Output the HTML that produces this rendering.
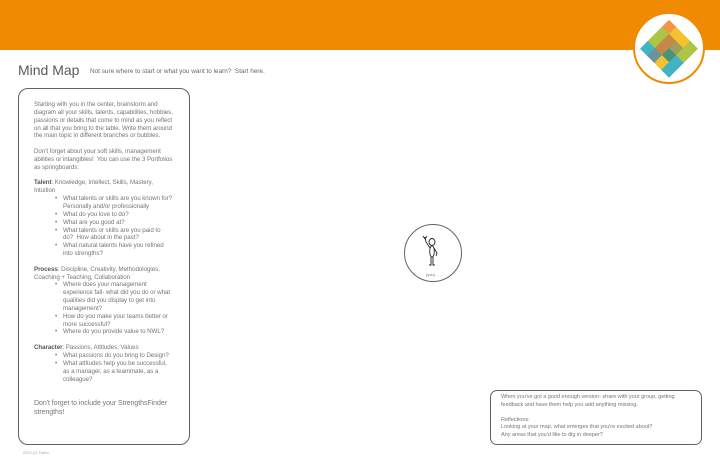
<!DOCTYPE html>
<html><head><style>
*{margin:0;padding:0;box-sizing:border-box}
body{width:720px;height:466px;background:#fff;position:relative;overflow:hidden;font-family:"Liberation Sans",sans-serif;color:#6b6560}
.bar{position:absolute;left:0;top:0;width:720px;height:50px;background:#F08A00}
.logo{position:absolute;left:633px;top:12px;width:72px;height:72px;border-radius:50%;background:#fff;border:2px solid #F08A00;overflow:hidden}
h1{position:absolute;left:18px;top:62px;font-size:14px;font-weight:normal;color:#5a5a5a}
.sub{position:absolute;left:90px;top:68px;font-size:6.4px;color:#666}
.box{position:absolute;left:18px;top:88px;width:172px;height:357px;border:1.5px solid #6b6058;border-radius:10px}
.t{position:absolute;left:34px;top:101px;width:139px;font-size:6.2px;line-height:7.85px;color:#777;letter-spacing:-0.05px}
.t p{margin-bottom:7.85px}
.t ul{list-style:none;margin-left:29px;margin-bottom:7.85px}
.t li{position:relative}
.t li:before{content:"•";position:absolute;left:-8px}
.t b{color:#555}
.big{font-size:7px;line-height:8.3px;margin-top:17px}
.you{position:absolute;left:404px;top:224px;width:58px;height:58px;border:1.3px solid #6b6058;border-radius:50%}
.youl{position:absolute;left:426px;top:272px;font-size:4px;color:#777}
.b2{position:absolute;left:490px;top:390px;width:212px;height:55px;border:1.3px solid #6b6058;border-radius:7px;padding:3px 10px;font-size:5.6px;line-height:7.6px;color:#777;letter-spacing:-0.05px}
.f{position:absolute;left:23px;top:451px;font-size:3.8px;color:#aaa}
</style></head><body>
<div class="bar"></div>
<div class="logo">
<svg width="68" height="68" viewBox="0 0 68 68" style="position:absolute;left:0;top:0">
<g transform="rotate(45 34 34)" opacity="0.82">
<rect x="14" y="14" width="11" height="11" fill="#EE7F1A"/>
<rect x="24" y="14" width="11" height="11" fill="#F5B400"/>
<rect x="34" y="14" width="11" height="11" fill="#F5B400"/>
<rect x="44" y="14" width="11" height="11" fill="#9BB81E"/>
<rect x="14" y="24" width="11" height="11" fill="#9BB81E"/>
<rect x="24" y="24" width="11" height="11" fill="#B87020"/>
<rect x="34" y="24" width="11" height="11" fill="#8A8A3A"/>
<rect x="44" y="24" width="11" height="11" fill="#9BB81E"/>
<rect x="14" y="34" width="11" height="11" fill="#9BB81E"/>
<rect x="24" y="34" width="11" height="11" fill="#B87020"/>
<rect x="34" y="34" width="11" height="11" fill="#1E7E5E"/>
<rect x="44" y="34" width="11" height="11" fill="#1AA3B8"/>
<rect x="14" y="44" width="11" height="11" fill="#1AA3B8"/>
<rect x="24" y="44" width="11" height="11" fill="#4A7A8A"/>
<rect x="34" y="44" width="11" height="11" fill="#F5B400"/>
<rect x="44" y="44" width="11" height="11" fill="#1AA3B8"/>
</g></svg></div>
<h1>Mind Map</h1>
<div class="sub">Not sure where to start or what you want to learn?&nbsp; Start here.</div>
<div class="box"></div>
<div class="t">
<p>Starting with you in the center, brainstorm and diagram all your skills, talents, capabilities, hobbies, passions or details that come to mind as you reflect on all that you bring to the table. Write them around the main topic in different branches or bubbles.</p>
<p>Don't forget about your soft skills, management abilities or intangibles!&nbsp; You can use the 3 Portfolios as springboards:</p>
<div><b>Talent</b>: Knowledge, Intellect, Skills, Mastery, Intuition</div>
<ul><li>What talents or skills are you known for? Personally and/or professionally</li><li>What do you love to do?</li><li>What are you good at?</li><li>What talents or skills are you paid to do?&nbsp; How about in the past?</li><li>What natural talents have you refined into strengths?</li></ul>
<div><b>Process</b>: Discipline, Creativity, Methodologies, Coaching + Teaching, Collaboration</div>
<ul><li>Where does your management experience fall- what did you do or what qualities did you display to get into management?</li><li>How do you make your teams better or more successful?</li><li>Where do you provide value to NWL?</li></ul>
<div><b>Character</b>: Passions, Attitudes, Values</div>
<ul style="margin-bottom:0"><li>What passions do you bring to Design?</li><li>What attitudes help you be successful, as a manager, as a teammate, as a colleague?</li></ul>
<div class="big">Don't forget to include your StrengthsFinder strengths!</div>
</div>
<div class="you"></div>
<svg style="position:absolute;left:420px;top:234px" width="24" height="34" viewBox="0 0 24 34" fill="none" stroke="#222" stroke-width="0.9">
<ellipse cx="12" cy="8" rx="3" ry="3.5"/>
<path d="M12 11.5 C9 13 9 22 12 23 C15 22 15 13 12 11.5"/>
<path d="M10 14 L6 8 L5 3 M5 5 L3 2 M5 5 L7 2 M14 14 L17 19 L16 22"/>
<path d="M11 23 L11 31 L9 31 M13 23 L13 31 L15 31"/>
</svg>
<div class="youl">(you)</div>
<div class="b2">When you've got a good enough version- share with your group, getting feedback and have them help you add anything missing.<br><br>Reflections:<br>Looking at your map, what emerges that you're excited about?<br>Any areas that you'd like to dig in deeper?</div>
<div class="f">2023 Q1 Fabric</div>
</body></html>
